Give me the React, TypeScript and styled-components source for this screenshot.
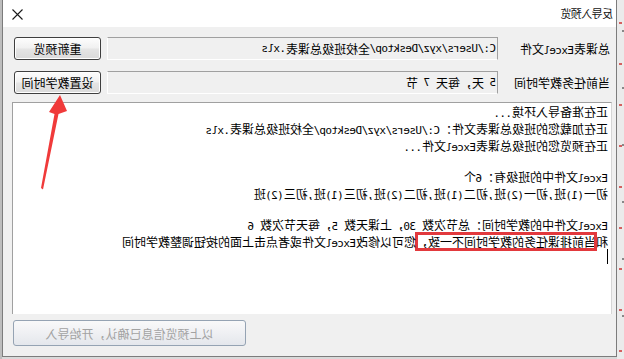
import React from "react";
import styled, { createGlobalStyle } from "styled-components";

const Global = createGlobalStyle`
  html, body { margin: 0; padding: 0; background: #dcdcdc; }
  body {
    width: 624px; height: 359px; overflow: hidden;
    font-family: "Noto Sans CJK SC", "Noto Sans", sans-serif;
    color: #000;
  }
`;

/* The reference is a horizontally mirrored capture: the page is laid out
   normally and then mirrored as a whole. */
const Screen = styled.div`
  position: relative;
  width: 624px;
  height: 359px;
  display: flex;
  align-items: flex-start;
  background: #d9d9d9;
  transform: scaleX(-1);
  overflow: hidden;
`;

const BackStrip = styled.div`
  flex: 0 0 7px;
  height: 359px;
  background-color: #ebebeb;
  background-image:
    repeating-linear-gradient(180deg, transparent 0 22px, rgba(205, 50, 50, 0.75) 22px 24px, transparent 24px 41px),
    repeating-linear-gradient(180deg, transparent 0 30px, rgba(70, 70, 70, 0.6) 30px 32px, transparent 32px 57px);
  background-size: 3px 100%, 2px 100%;
  background-position: 2px 0, 0 0;
  background-repeat: no-repeat;
`;

const EdgeStrip = styled.div`
  flex: 0 0 2px;
  height: 359px;
  background: #bdbdbd;
`;

const Window = styled.div`
  flex: 0 0 615px;
  height: 357px;
  box-sizing: border-box;
  border-left: 1px solid #7c7c7c;
  border-right: 1px solid #7c7c7c;
  border-bottom: 1px solid #7c7c7c;
  display: flex;
  flex-direction: column;
  background: #f0f0f0;
`;

const TitleBar = styled.div`
  height: 27px;
  flex: 0 0 27px;
  background: #ffffff;
  display: flex;
  align-items: center;
  justify-content: space-between;
  padding: 0 9px 0 3px;
`;

const Title = styled.span`
  font-size: 11px;
  letter-spacing: -0.6px;
  line-height: 27px;
  color: #111;
  white-space: nowrap;
`;

const CloseGlyph = styled.svg`
  display: block;
  width: 11px;
  height: 11px;
  margin-top: 1px;
`;

const Body = styled.div`
  flex: 1;
  display: flex;
  flex-direction: column;
  padding: 10px 9px 10px 4px;
`;

const FormGrid = styled.div`
  display: grid;
  grid-template-columns: 108px 391px 87px;
  grid-auto-rows: 23px;
  column-gap: 6px;
  row-gap: 11px;
  align-items: center;
  margin-right: 2px;
`;

const Label = styled.div`
  padding-left: 2px;
  font-size: 12px;
  white-space: pre;
`;

const Field = styled.div`
  height: 23px;
  box-sizing: border-box;
  border-top: 1px solid #a0a0a0;
  border-left: 1px solid #a0a0a0;
  border-right: 1px solid #ffffff;
  border-bottom: 1px solid #ffffff;
  background: #f0f0f0;
  display: flex;
  align-items: center;
  padding-left: 1px;
  font-size: 12px;
  white-space: pre;
`;

const Button = styled.button`
  height: 23px;
  box-sizing: border-box;
  padding: 0;
  border: 1px solid #3f3f3f;
  border-radius: 3px;
  background: linear-gradient(#fdfdfd 0%, #f1f1f1 45%, #e4e4e4 55%, #dadada 100%);
  box-shadow: inset 0 0 0 1px #ffffff;
  font-family: "Noto Sans CJK SC", sans-serif;
  font-size: 12px;
  color: #000;
  white-space: nowrap;
`;

const LogPanel = styled.div`
  margin-top: 8px;
  height: 212px;
  box-sizing: border-box;
  background: #ffffff;
  border-top: 1px solid #a0a0a0;
  border-right: 1px solid #a0a0a0;
  border-left: 1px solid #d6d6d6;
  padding-left: 3px;
  font-size: 12px;
`;

const LogLine = styled.div<{ $empty?: boolean }>`
  height: ${(p) => (p.$empty ? "14px" : "17px")};
  line-height: 17px;
  white-space: pre;
`;

const Highlight = styled.span`
  display: inline-block;
  height: 17px;
  line-height: 17px;
  vertical-align: top;
  outline: 3px solid #e2393d;
  outline-offset: -2px;
`;

const Caret = styled.span`
  display: inline-block;
  width: 1px;
  height: 15px;
  margin-top: -1px;
  vertical-align: top;
  background: #000;
`;

const Footer = styled.div`
  display: flex;
  justify-content: flex-end;
  margin-top: 6px;
  padding-right: 1px;
`;

const ConfirmButton = styled.button`
  width: 233px;
  height: 26px;
  box-sizing: border-box;
  padding: 0;
  border: 1px solid #95a3b3;
  border-radius: 3px;
  background: linear-gradient(#f9f9f9 0%, #eff0f3 50%, #e4e7ec 100%);
  font-family: "Noto Sans CJK SC", sans-serif;
  font-size: 12px;
  color: #a2a2a2;
  white-space: nowrap;
`;

const ArrowLayer = styled.svg`
  position: absolute;
  left: 0;
  top: 0;
  width: 624px;
  height: 359px;
  pointer-events: none;
`;

const Asc = styled.span`
  font-family: "DejaVu Sans Mono", "Liberation Mono", monospace;
  font-size: 11px;
  letter-spacing: -0.62px;
`;

const Mixed = ({ text }: { text: string }) => (
  <>
    {text.split(/([\x20-\x7e]+)/).map((part, i) =>
      part === "" ? null : i % 2 ? (
        <Asc key={i}>{part}</Asc>
      ) : (
        <React.Fragment key={i}>{part}</React.Fragment>
      )
    )}
  </>
);

const logLines: string[] = [
  "正在准备导入环境...",
  "正在加载您的班级总课表文件：C:/Users/xyz/Desktop/全校班级总课表.xls",
  "正在预览您的班级总课表Excel文件...",
  "",
  "Excel文件中的班级有：6个",
  "初一(1)班,初一(2)班,初二(1)班,初二(2)班,初三(1)班,初三(2)班",
  "",
  "Excel文件中的教学时间：总节次数 30，上课天数 5，每天节次数 6",
];

export default function App() {
  return (
    <>
      <Global />
      <Screen>
        <BackStrip />
        <Window>
          <TitleBar>
            <Title>反导入预览</Title>
            <CloseGlyph viewBox="0 0 11 11">
              <path d="M0.5 0.5 L10.5 10.5 M10.5 0.5 L0.5 10.5" stroke="#1a1a1a" strokeWidth="1.1" fill="none" />
            </CloseGlyph>
          </TitleBar>
          <Body>
            <FormGrid>
              <Label>
                <Mixed text="总课表Excel文件" />
              </Label>
              <Field>
                <Mixed text="C:/Users/xyz/Desktop/全校班级总课表.xls" />
              </Field>
              <Button>重新预览</Button>
              <Label>当前任务教学时间</Label>
              <Field>
                <Mixed text="5 天，每天 7 节" />
              </Field>
              <Button>设置教学时间</Button>
            </FormGrid>
            <LogPanel>
              {logLines.map((line, i) => (
                <LogLine key={i} $empty={line === ""}>
                  <Mixed text={line} />
                </LogLine>
              ))}
              <LogLine>
                和<Highlight>当前排课任务的教学时间不一致，</Highlight>
                <Mixed text="您可以修改Excel文件或者点击上面的按钮调整教学时间" />
              </LogLine>
              <LogLine>
                <Caret />
              </LogLine>
            </LogPanel>
            <Footer>
              <ConfirmButton disabled>以上预览信息已确认，开始导入</ConfirmButton>
            </Footer>
          </Body>
        </Window>
        <EdgeStrip />
        <ArrowLayer viewBox="0 0 624 359">
          <polygon
            points="564,95 575,112 569.5,114 583,188 581,189.5 565.5,114 557,111"
            fill="#f03a3a"
          />
        </ArrowLayer>
      </Screen>
    </>
  );
}
